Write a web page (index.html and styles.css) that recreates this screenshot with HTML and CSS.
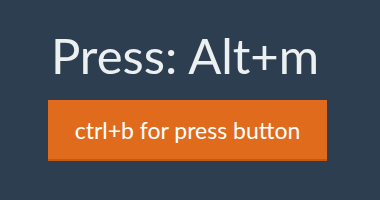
FILE: index.html
```html
<!DOCTYPE html>
<html lang="en">
<head>
    <meta charset="UTF-8">
    <title>Keyboard shortcuts</title>
    <link rel="stylesheet" href="styles.css">
</head>
<body>
    <div class="container">
        <h1 class="pressed">Press: Alt+m</h1>
        <button class="press-button">ctrl+b for press button</button>
    </div>
</body>
</html>
```

FILE: styles.css
```css
body {
    margin: 0;
    padding: 0;
    background-color: #2c3e50;
    font-family: Lato, "Open Sans", sans-serif;
    height: 200px;
}
.container {
    display: flex;
    flex-direction: column;
    align-items: center;
    padding-top: 26px;
    padding-right: 5px;
}
.pressed {
    margin: 0 5px 0 0;
    color: #ecf0f1;
    font-size: 49px;
    font-weight: normal;
    line-height: 59px;
}
.press-button {
    margin-top: 15px;
    width: 279px;
    height: 61px;
    padding: 0;
    border: none;
    border-bottom: 2px solid #c25a14;
    background-color: #e06b1c;
    color: #fff;
    font-family: Lato, "Open Sans", sans-serif;
    font-size: 23px;
    cursor: pointer;
}
```
